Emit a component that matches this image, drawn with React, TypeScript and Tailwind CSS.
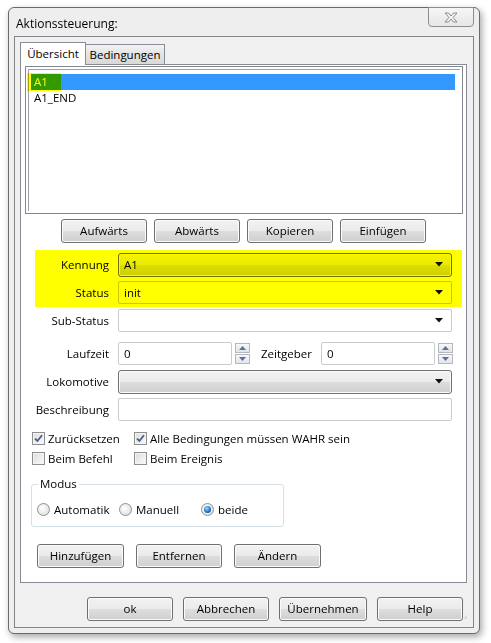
import React from 'react';

const btn =
  'h-[24px] flex items-center justify-center rounded-[3px] border border-[#707070] bg-[linear-gradient(#f2f2f2,#ebebeb_48%,#dddddd_52%,#cfcfcf)] shadow-[inset_0_0_0_1px_#fbfbfb] text-black';

const Button: React.FC<{ label: string; w?: string }> = ({ label, w = 'w-[86px]' }) => (
  <div className={`${w} ${btn}`}>{label}</div>
);

const Arrow = () => (
  <svg width="8" height="5" viewBox="0 0 8 5" className="shrink-0">
    <path d="M0 0H8L4 4.5Z" fill="#111" />
  </svg>
);

const ComboButton: React.FC<{ value?: string }> = ({ value = '' }) => (
  <div className={`w-[334px] h-[23px] ${btn} !justify-between pl-[5px] pr-[8px]`}>
    <span>{value}</span>
    <Arrow />
  </div>
);

const ComboEdit: React.FC<{ value?: string }> = ({ value = '' }) => (
  <div className="w-[334px] h-[23px] flex items-center justify-between border border-[#c9cbd0] rounded-[2px] bg-white pl-[5px] pr-[8px]">
    <span>{value}</span>
    <Arrow />
  </div>
);

const Spin = () => (
  <div className="flex flex-col gap-[1px] ml-[3px] mt-[1px]">
    {['M0 4L3.5 0L7 4Z', 'M0 0H7L3.5 4Z'].map((d) => (
      <div
        key={d}
        className="w-[15px] h-[10px] flex items-center justify-center border border-[#b5b8c0] bg-[linear-gradient(#f8f8f8,#e4e4e4)]"
      >
        <svg width="7" height="4" viewBox="0 0 7 4">
          <path d={d} fill="#5a6fa8" />
        </svg>
      </div>
    ))}
  </div>
);

const TextBox: React.FC<{ value?: string; w: string }> = ({ value = '', w }) => (
  <div className={`${w} h-[23px] flex items-center border border-[#c9cbd0] rounded-[2px] bg-white pl-[5px]`}>{value}</div>
);

const Label: React.FC<{ text: string }> = ({ text }) => (
  <div className="w-[88px] text-right mr-[9px] shrink-0">{text}</div>
);

const Check: React.FC<{ label: string; checked?: boolean; w: string }> = ({ label, checked, w }) => (
  <div className={`${w} flex items-center gap-[3px]`}>
    <div className="w-[13px] h-[13px] border border-[#8e8f8f] bg-[linear-gradient(135deg,#dcdcdc,#fbfbfb)] flex items-center justify-center shadow-[inset_0_0_0_1px_#f4f4f4]">
      {checked && (
        <svg width="9" height="9" viewBox="0 0 9 9">
          <path d="M1 4.6L3.4 7L8 1.2" stroke="#4a5b8c" strokeWidth="1.8" fill="none" />
        </svg>
      )}
    </div>
    <span>{label}</span>
  </div>
);

const Radio: React.FC<{ label: string; checked?: boolean; w: string }> = ({ label, checked, w }) => (
  <div className={`${w} flex items-center gap-[4px]`}>
    <div className="w-[13px] h-[13px] rounded-full border border-[#8e8f8f] bg-[radial-gradient(circle_at_40%_40%,#ffffff,#d8d8d8)] flex items-center justify-center">
      {checked && <div className="w-[7px] h-[7px] rounded-full bg-[radial-gradient(circle_at_40%_35%,#9ad7ff,#1a6fc0_60%,#0a4a90)]" />}
    </div>
    <span>{label}</span>
  </div>
);

export default function App() {
  return (
    <div className="w-[491px] h-[643px] bg-white pt-[7px] pl-[8px] font-['Open_Sans',sans-serif] text-[11.5px] leading-none text-black">
      <div className="w-[472px] h-[627px] border border-[#6a6a6a] rounded-[6px] bg-[#eeeeee] shadow-[2px_3px_7px_rgba(0,0,0,0.35)] flex flex-col px-[5px]">
        {/* title bar */}
        <div className="h-[28px] flex items-start justify-between">
          <div className="pt-[10px] pl-[2px] text-[12px]">Aktionssteuerung:</div>
          <div className="-mt-px w-[46px] h-[20px] rounded-b-[4px] border border-[#8e8e8e] bg-[linear-gradient(#f6f6f6,#e6e6e6)] flex items-center justify-center">
            <svg width="14" height="11" viewBox="0 0 14 11">
              <path
                d="M1 1H4.5L7 4L9.5 1H13L9 5.5L13 10H9.5L7 7L4.5 10H1L5 5.5Z"
                fill="#f4f4f4"
                stroke="#8c8c8c"
                strokeWidth="1"
                strokeLinejoin="round"
              />
            </svg>
          </div>
        </div>

        {/* client area */}
        <div className="h-[592px] border border-[#858585] bg-[#f0f0f0] pt-[5px] pl-[5px] pr-[6px] flex flex-col">
          {/* tabs */}
          <div className="flex items-end h-[22px] relative z-10">
            <div className="w-[66px] h-[23px] -mb-px border border-b-0 border-[#898c95] bg-white flex items-center justify-center pb-[1px]">
              Übersicht
            </div>
            <div className="w-[80px] h-[20px] -ml-px border border-b-0 border-[#898c95] bg-[linear-gradient(#f3f3f3,#e3e3e3_50%,#d9d9d9)] flex items-center justify-center">
              Bedingungen
            </div>
          </div>

          {/* pane */}
          <div className="h-[519px] border border-[#898c95] bg-white flex flex-col">
            {/* list */}
            <div className="relative ml-[4px] mt-[1px] w-[438px] h-[148px] border border-[#828790] p-[2px]">
              <div className="h-full border-l border-t border-[#a0a0a0] pl-[2px] pt-[4px]">
                <div className="h-[16px] w-[424px] bg-[#3399ff] text-white flex items-center pl-[3px]">A1</div>
                <div className="h-[16px] flex items-center pl-[3px]">A1_END</div>
              </div>
              <div className="absolute left-[1px] top-[6px] w-[34px] h-[18px] bg-[#ffff00] mix-blend-multiply" />
            </div>

            {/* list buttons */}
            <div className="mt-[5px] flex justify-center gap-[7px]">
              <Button label="Aufwärts" />
              <Button label="Abwärts" />
              <Button label="Kopieren" />
              <Button label="Einfügen" />
            </div>

            {/* form */}
            <div className="relative mt-[10px] flex flex-col">
              <div className="flex items-center h-[23px]">
                <Label text="Kennung" />
                <ComboButton value="A1" />
              </div>
              <div className="flex items-center h-[23px] mt-[5px]">
                <Label text="Status" />
                <ComboEdit value="init" />
              </div>
              <div className="flex items-center h-[23px] mt-[5px]">
                <Label text="Sub-Status" />
                <ComboEdit />
              </div>
              <div className="flex items-start h-[23px] mt-[10px]">
                <div className="flex items-center h-[23px]">
                  <Label text="Laufzeit" />
                </div>
                <TextBox value="0" w="w-[114px]" />
                <Spin />
                <div className="h-[23px] flex items-center ml-[11px] w-[60px]">Zeitgeber</div>
                <TextBox value="0" w="w-[114px]" />
                <Spin />
              </div>
              <div className="flex items-center h-[23px] mt-[5px]">
                <Label text="Lokomotive" />
                <ComboButton />
              </div>
              <div className="flex items-center h-[23px] mt-[5px]">
                <Label text="Beschreibung" />
                <TextBox w="w-[334px]" />
              </div>
              <div className="absolute left-[14px] top-[-3px] w-[427px] h-[57px] bg-[#ffff00] mix-blend-multiply" />
            </div>

            {/* checkboxes */}
            <div className="mt-[11px] ml-[11px] flex flex-col gap-[7px]">
              <div className="flex h-[13px] items-center">
                <Check label="Zurücksetzen" checked w="w-[102px]" />
                <Check label="Alle Bedingungen müssen WAHR sein" checked w="w-[260px]" />
              </div>
              <div className="flex h-[13px] items-center">
                <Check label="Beim Befehl" w="w-[102px]" />
                <Check label="Beim Ereignis" w="w-[150px]" />
              </div>
            </div>

            {/* group box */}
            <div className="relative mt-[19px] ml-[10px] w-[253px] h-[43px] border border-[#d5dfe5] rounded-[3px] flex items-center pl-[5px] pt-[8px]">
              <div className="absolute left-[6px] -top-[7px] bg-white px-[2px]">Modus</div>
              <Radio label="Automatik" w="w-[82px]" />
              <Radio label="Manuell" w="w-[82px]" />
              <Radio label="beide" checked w="w-[70px]" />
            </div>

            {/* action buttons */}
            <div className="mt-[17px] ml-[16px] flex gap-[12px]">
              <Button label="Hinzufügen" w="w-[87px]" />
              <Button label="Entfernen" w="w-[86px]" />
              <Button label="Ändern" w="w-[87px]" />
            </div>
          </div>

          {/* dialog buttons */}
          <div className="mt-[14px] flex items-start">
            <div className="ml-[67px] flex gap-[10px]">
              <Button label="ok" />
              <Button label="Abbrechen" />
              <Button label="Übernehmen" w="w-[88px]" />
              <Button label="Help" />
            </div>
            <svg width="8" height="8" viewBox="0 0 8 8" className="ml-[1px] mt-[16px]">
              {[
                [6, 0],
                [6, 3],
                [3, 3],
                [6, 6],
                [3, 6],
                [0, 6],
              ].map(([x, y]) => (
                <rect key={`${x}-${y}`} x={x} y={y} width="2" height="2" fill="#b8b8b8" />
              ))}
            </svg>
          </div>
        </div>
      </div>
    </div>
  );
}
